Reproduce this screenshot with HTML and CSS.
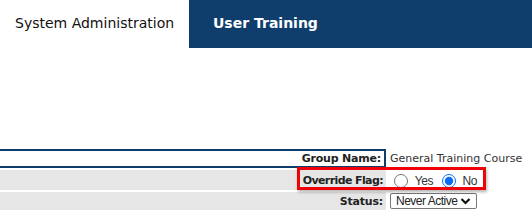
FILE: index.html
```html
<!DOCTYPE html>
<html lang="en">
  <head>
    <meta charset="UTF-8" />
    <title>User Training</title>
    <link rel="stylesheet" href="styles.css">
  </head>
  <body>
    <div class="tabs">
      <div class="tab">System Administration</div>
      <div class="tab active">User Training</div>
    </div>
    <div class="form">
      <table class="fields">
        <tr class="first">
          <td class="label">Group Name:</td>
          <td class="value">General Training Course</td>
        </tr>
        <tr class="second">
          <td class="label">Override Flag:</td>
          <td class="value">
            <label><input type="radio" name="flag" /> Yes</label>
            <label><input type="radio" name="flag" checked /> No</label>
          </td>
        </tr>
        <tr class="third">
          <td class="label">Status:</td>
          <td class="value">
            <select>
              <option>Never Active</option>
            </select>
          </td>
        </tr>
      </table>
      <div class="highlight"></div>
    </div>
  </body>
</html>
```

FILE: styles.css
```css
* {
  margin: 0;
  padding: 0;
  box-sizing: border-box;
}
body {
  font-family: "DejaVu Sans", Verdana, sans-serif;
  background: #fff;
  width: 532px;
  overflow: hidden;
}
.tabs {
  display: flex;
  height: 48px;
}
.tab {
  width: 189px;
  padding-left: 15px;
  line-height: 46px;
  font-size: 14px;
  color: #111;
}
.tab.active {
  flex: 1;
  padding-left: 24px;
  background: #103e6c;
  color: #fff;
  font-weight: bold;
  font-size: 14px;
}
.form {
  position: relative;
  margin-top: 99px;
}
.fields {
  width: 532px;
  border-collapse: separate;
  border-spacing: 0 2px;
}
.fields td {
  font-family: "DejaVu Sans", Verdana, sans-serif;
  font-size: 11px;
  vertical-align: middle;
  padding: 0;
  white-space: nowrap;
}
.fields .first td {
  height: 19px;
}
.fields .second td {
  height: 20px;
  padding-top: 1px;
}
.fields .third td {
  height: 18px;
}
.fields .label {
  width: 386px;
  background: #e6e6e6;
  text-align: right;
  font-weight: bold;
  letter-spacing: -0.2px;
  color: #222;
  padding-right: 3px;
}
.fields .second .label {
  letter-spacing: -0.6px;
}
.fields .first .label {
  background: #fff;
  border: 2px solid #103e6c;
  border-left: none;
}
.fields .value {
  padding-left: 4px;
  color: #333;
}
.fields .second .value {
  padding-left: 8px;
}
.fields label {
  font-family: "Liberation Sans", Arial, sans-serif;
  font-size: 12px;
  letter-spacing: -0.4px;
  color: #333;
}
.fields label + label {
  margin-left: 5px;
}
.fields input[type="radio"] {
  width: 14px;
  height: 14px;
  vertical-align: -3px;
  margin: 0 4px 0 0;
  accent-color: #0a6cf5;
}
.fields select {
  appearance: none;
  font-family: "Liberation Sans", Arial, sans-serif;
  font-size: 12px;
  letter-spacing: -0.5px;
  line-height: 14px;
  height: 16px;
  width: 87px;
  padding: 0 0 0 5px;
  color: #222;
  background: #fff url("data:image/svg+xml;utf8,<svg xmlns='http://www.w3.org/2000/svg' width='11' height='8' viewBox='0 0 11 8'><path d='M1.5 2 L5.5 6 L9.5 2' fill='none' stroke='%23111' stroke-width='2.2'/></svg>") no-repeat right 5px center;
  border: 1px solid #767676;
  border-radius: 2px;
}
.highlight {
  position: absolute;
  left: 297px;
  top: 20px;
  width: 189px;
  height: 23px;
  border: 3px solid #f00008;
  box-shadow: 1px 2px 3px rgba(0, 0, 0, 0.3);
}
```
